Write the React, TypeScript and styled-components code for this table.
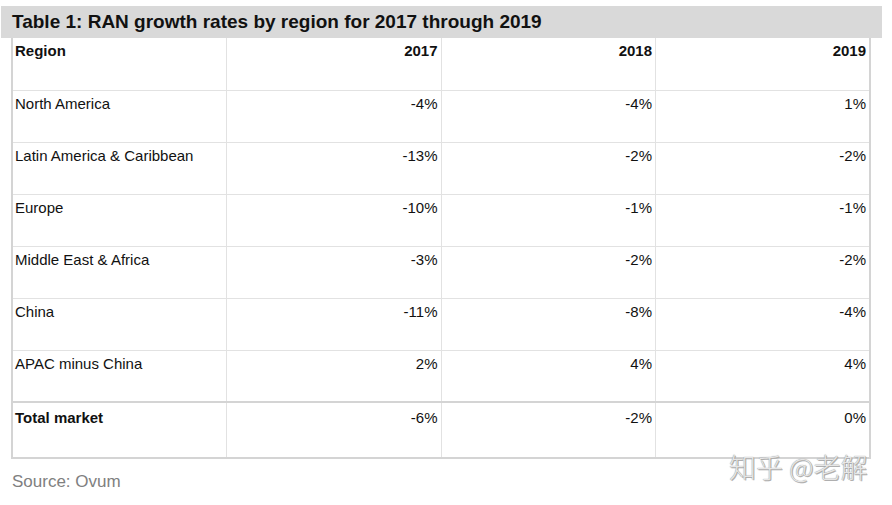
import * as React from 'react';
import styled, { createGlobalStyle } from 'styled-components';

const rows: [string, string, string, string][] = [
    ['North America', '-4%', '-4%', '1%'],
    ['Latin America & Caribbean', '-13%', '-2%', '-2%'],
    ['Europe', '-10%', '-1%', '-1%'],
    ['Middle East & Africa', '-3%', '-2%', '-2%'],
    ['China', '-11%', '-8%', '-4%'],
    ['APAC minus China', '2%', '4%', '4%'],
];

const App: React.FC = () => {
    return (
        <Page>
            <GlobalStyle />
            <TitleBar>Table 1: RAN growth rates by region for 2017 through 2019</TitleBar>
            <StyledTable>
                <tbody>
                    <Row>
                        <Cell bold>Region</Cell>
                        <Cell bold right>2017</Cell>
                        <Cell bold right>2018</Cell>
                        <Cell bold right>2019</Cell>
                    </Row>
                    {rows.map(r => (
                        <Row key={r[0]}>
                            <Cell>{r[0]}</Cell>
                            <Cell right>{r[1]}</Cell>
                            <Cell right>{r[2]}</Cell>
                            <Cell right>{r[3]}</Cell>
                        </Row>
                    ))}
                    <Row total>
                        <Cell bold>Total market</Cell>
                        <Cell right>-6%</Cell>
                        <Cell right>-2%</Cell>
                        <Cell right>0%</Cell>
                    </Row>
                </tbody>
            </StyledTable>
            <Source>Source: Ovum</Source>
            <Watermark>知乎 @老解</Watermark>
        </Page>
    );
}

const GlobalStyle = createGlobalStyle`
    body {
        margin: 0;
        background: #ffffff;
        font-family: "Liberation Sans", Arial, sans-serif;
        color: #111111;
    }
`;

const Page = styled.div`
    position: relative;
    width: 892px;
    height: 505px;
    padding-top: 6px;
    box-sizing: border-box;
`;

const TitleBar = styled.div`
    width: 870px;
    height: 32px;
    margin-left: 1px;
    padding-left: 11px;
    background: #d9d9d9;
    font-size: 19px;
    font-weight: bold;
    line-height: 31px;
    color: #111111;
`;

const StyledTable = styled.table`
    margin-left: 11px;
    width: 860px;
    table-layout: fixed;
    border-collapse: collapse;
    border-left: 2px solid #d4d4d4;
    border-right: 2px solid #d4d4d4;
    border-bottom: 2px solid #d4d4d4;
`;

const Row = styled.tr<{ total?: boolean }>`
    height: 52px;
    border-bottom: 1px solid #e2e2e2;
    ${p => p.total && `
        height: 56px;
        border-top: 2px solid #d4d4d4;
        td { padding-top: 6px; }
    `}
`;

const Cell = styled.td<{ bold?: boolean; right?: boolean }>`
    vertical-align: top;
    padding: 4px 3px 0 2px;
    border-left: 1px solid #e2e2e2;
    font-size: 15px;
    line-height: 18px;
    font-weight: ${p => (p.bold ? 'bold' : 'normal')};
    text-align: ${p => (p.right ? 'right' : 'left')};

    &:first-child {
        border-left: none;
    }
`;

const Source = styled.div`
    margin-top: 13px;
    padding-left: 12px;
    font-size: 17px;
    color: #808080;
`;

const Watermark = styled.div`
    position: absolute;
    left: 729px;
    top: 447px;
    font-family: "Noto Sans CJK SC", sans-serif;
    font-size: 27px;
    font-weight: 300;
    color: #e6e6e6;
    text-shadow: 0 0 1px #7a7a7a, 1px 1px 0 #b5b5b5;
    white-space: pre;
`;

export default App;
